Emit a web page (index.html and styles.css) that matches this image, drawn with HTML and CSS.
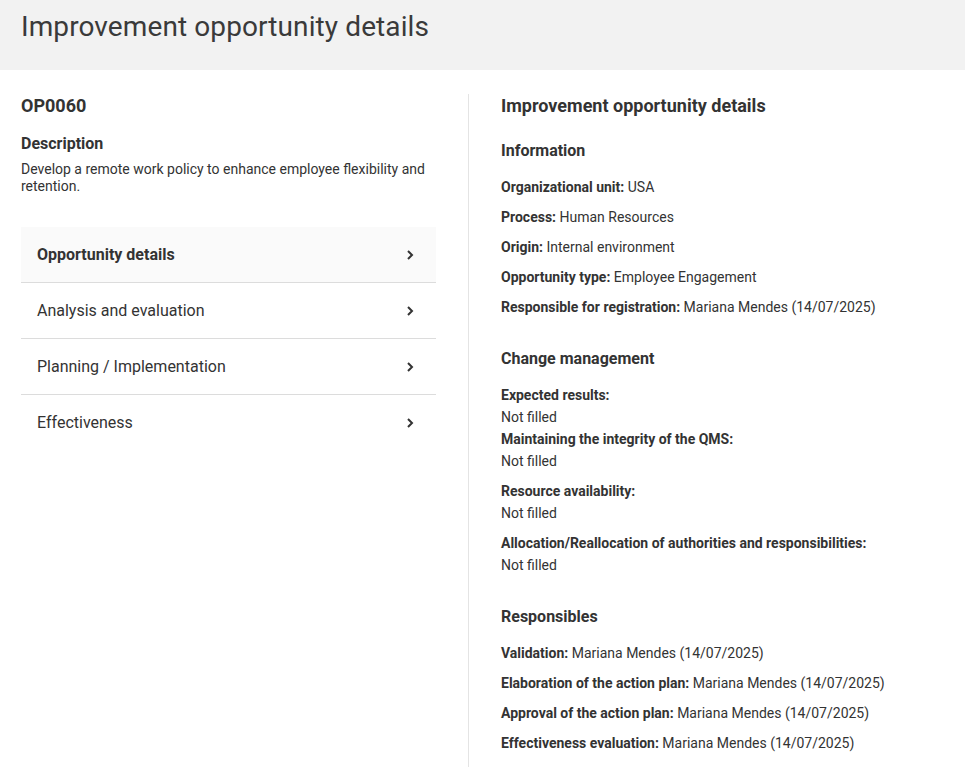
FILE: index.html
```html
<!DOCTYPE html>
<html lang="en">
<head>
  <meta charset="UTF-8">
  <meta name="viewport" content="width=device-width, initial-scale=1.0">
  <title>Improvement opportunity details</title>
  <link rel="stylesheet" href="styles.css">
</head>
<body>

  <!-- Page Header -->
  <header class="page-header">
    <h1>Improvement opportunity details</h1>
  </header>

  <main class="content">

    <!-- Left column: summary and navigation -->
    <section class="summary">
      <h2 class="code">OP0060</h2>
      <h3 class="desc-title">Description</h3>
      <p class="desc-text">Develop a remote work policy to enhance employee flexibility and retention.</p>

      <ul class="steps">
        <li class="step active">
          <span>Opportunity details</span>
          <svg class="chevron" width="8" height="12" viewBox="0 0 8 12"><path d="M2 2 L6 6 L2 10" fill="none" stroke="#333" stroke-width="2"/></svg>
        </li>
        <li class="step">
          <span>Analysis and evaluation</span>
          <svg class="chevron" width="8" height="12" viewBox="0 0 8 12"><path d="M2 2 L6 6 L2 10" fill="none" stroke="#333" stroke-width="2"/></svg>
        </li>
        <li class="step">
          <span>Planning / Implementation</span>
          <svg class="chevron" width="8" height="12" viewBox="0 0 8 12"><path d="M2 2 L6 6 L2 10" fill="none" stroke="#333" stroke-width="2"/></svg>
        </li>
        <li class="step">
          <span>Effectiveness</span>
          <svg class="chevron" width="8" height="12" viewBox="0 0 8 12"><path d="M2 2 L6 6 L2 10" fill="none" stroke="#333" stroke-width="2"/></svg>
        </li>
      </ul>
    </section>

    <!-- Right column: details -->
    <section class="details">
      <h2 class="details-title">Improvement opportunity details</h2>

      <div class="group">
        <h3>Information</h3>
        <p class="row"><b>Organizational unit:</b> USA</p>
        <p class="row"><b>Process:</b> Human Resources</p>
        <p class="row"><b>Origin:</b> Internal environment</p>
        <p class="row"><b>Opportunity type:</b> Employee Engagement</p>
        <p class="row"><b>Responsible for registration:</b> Mariana Mendes (14/07/2025)</p>
      </div>

      <div class="group">
        <h3>Change management</h3>
        <div class="field tight">
          <b>Expected results:</b>
          <span>Not filled</span>
        </div>
        <div class="field">
          <b>Maintaining the integrity of the QMS:</b>
          <span>Not filled</span>
        </div>
        <div class="field">
          <b>Resource availability:</b>
          <span>Not filled</span>
        </div>
        <div class="field">
          <b>Allocation/Reallocation of authorities and responsibilities:</b>
          <span>Not filled</span>
        </div>
      </div>

      <div class="group">
        <h3>Responsibles</h3>
        <p class="row"><b>Validation:</b> Mariana Mendes (14/07/2025)</p>
        <p class="row"><b>Elaboration of the action plan:</b> Mariana Mendes (14/07/2025)</p>
        <p class="row"><b>Approval of the action plan:</b> Mariana Mendes (14/07/2025)</p>
        <p class="row"><b>Effectiveness evaluation:</b> Mariana Mendes (14/07/2025)</p>
      </div>
    </section>

  </main>

</body>
</html>
```

FILE: styles.css
```css
/* Reset some default styles */
* {
  margin: 0;
  padding: 0;
  box-sizing: border-box;
}

body {
  font-family: Roboto, "Liberation Sans", sans-serif;
  background-color: #fff;
  color: #333;
}

/* Header */
.page-header {
  background-color: #f2f2f2;
  height: 70px;
  padding: 9px 21px 0;
}

.page-header h1 {
  font-size: 28px;
  font-weight: 400;
  line-height: 36px;
  letter-spacing: 0.1px;
  color: #3a3a3a;
}

/* Two columns */
.content {
  display: flex;
  padding: 24px 0 0 21px;
}

.summary {
  width: 415px;
}

.details {
  flex: 1;
  margin-left: 32px;
  padding-left: 32px;
  border-left: 1px solid #e4e4e4;
  min-height: 680px;
}

.code {
  font-size: 18px;
  font-weight: 700;
  line-height: 24px;
}

.desc-title {
  font-size: 16px;
  font-weight: 700;
  line-height: 20px;
  margin-top: 16px;
}

.desc-text {
  font-size: 14px;
  line-height: 17px;
  margin-top: 7px;
}

/* Step list */
.steps {
  list-style: none;
  margin-top: 32px;
}

.step {
  display: flex;
  justify-content: space-between;
  align-items: center;
  height: 56px;
  padding: 0 22px 0 16px;
  font-size: 16px;
  border-bottom: 1px solid #dcdcdc;
}

.step:last-child {
  border-bottom: none;
  height: 55px;
}

.step.active {
  background-color: #fafafa;
  font-weight: 700;
}

.chevron {
  display: block;
}

/* Details */
.details-title {
  font-size: 18px;
  font-weight: 700;
  line-height: 24px;
}

.group {
  margin-top: 23px;
}

.group + .group {
  margin-top: 27px;
}

.group:last-child {
  margin-top: 31px;
}

.group h3 {
  font-size: 16px;
  font-weight: 700;
  line-height: 20px;
  margin-bottom: 11px;
}

.row {
  font-size: 14px;
  line-height: 30px;
}

.row b,
.field b {
  font-weight: 700;
}

.field {
  display: flex;
  flex-direction: column;
  font-size: 14px;
  line-height: 22px;
  margin-top: 8px;
}

.field.tight {
  margin-top: 15px;
}

.field.tight + .field {
  margin-top: 0;
}
```
